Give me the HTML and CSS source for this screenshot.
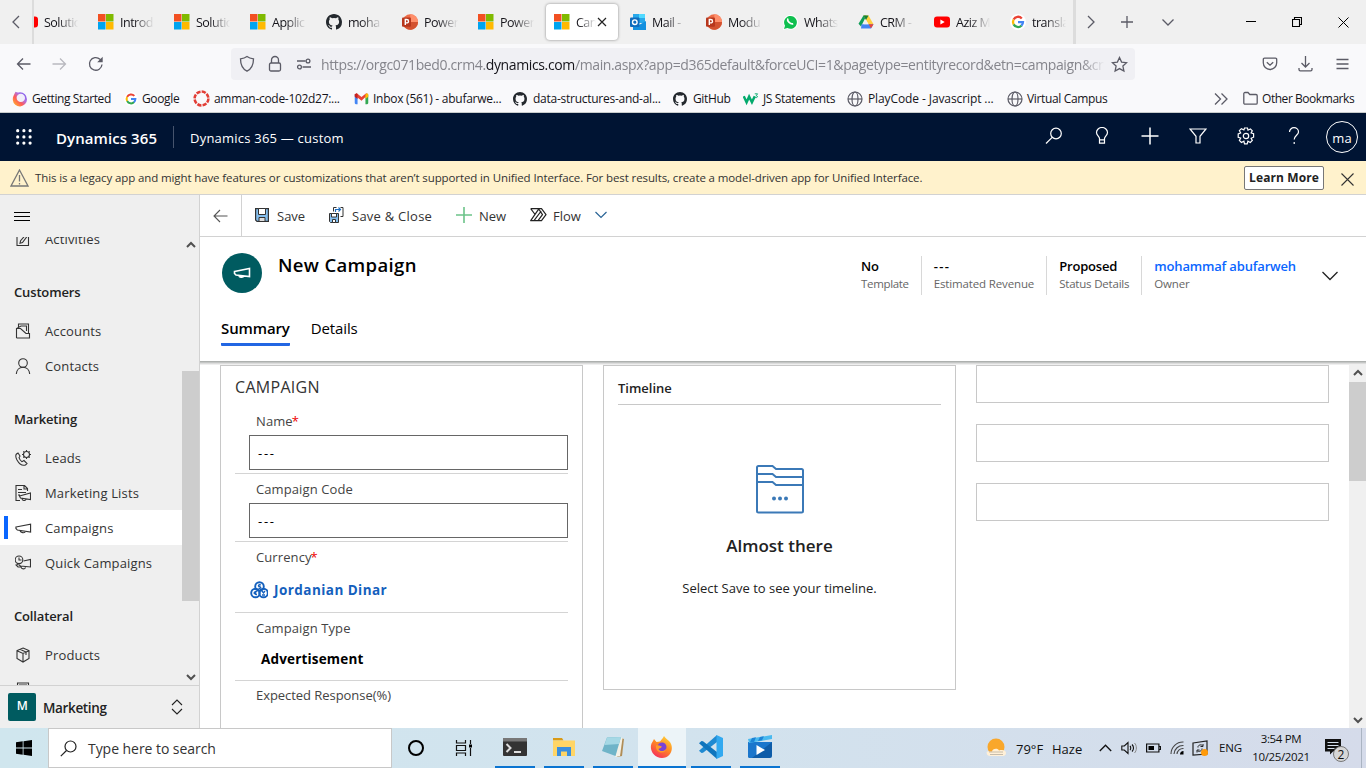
FILE: index.html
```html
<!DOCTYPE html>
<html lang="en">
<head>
<meta charset="utf-8">
<title>New Campaign - Dynamics 365</title>
<link rel="stylesheet" href="styles.css">
</head>
<body>
<svg class="defs" width="0" height="0">
  <symbol id="ms" viewBox="0 0 16 16"><path fill="#f25022" d="M0 0h7.5v7.5H0z"/><path fill="#7fba00" d="M8 0h7.5v7.5H8z"/><path fill="#00a4ef" d="M0 8h7.5v7.5H0z"/><path fill="#ffb900" d="M8 8h7.5v7.5H8z"/></symbol>
  <symbol id="gh" viewBox="0 0 16 16"><path fill="#24292e" d="M8 0C3.58 0 0 3.58 0 8c0 3.54 2.29 6.53 5.47 7.59.4.07.55-.17.55-.38v-1.49c-2.23.48-2.7-.94-2.7-.94-.36-.92-.89-1.17-.89-1.17-.73-.5.05-.49.05-.49.81.06 1.23.83 1.23.83.72 1.23 1.88.87 2.34.67.07-.52.28-.87.5-1.07-1.77-.2-3.64-.89-3.64-3.95 0-.88.31-1.59.82-2.15-.08-.2-.35-1.02.08-2.12 0 0 .67-.21 2.2.82a7.6 7.6 0 0 1 4 0c1.53-1.04 2.2-.82 2.2-.82.44 1.1.16 1.92.08 2.12.51.56.82 1.27.82 2.15 0 3.07-1.87 3.75-3.65 3.95.29.25.54.73.54 1.48v2.19c0 .21.15.46.55.38A8.01 8.01 0 0 0 16 8c0-4.42-3.58-8-8-8z"/></symbol>
  <symbol id="ppt" viewBox="0 0 16 16"><circle cx="8.3" cy="8" r="7.7" fill="#ed6c47"/><path fill="#ff8f6b" d="M8.3.3A7.7 7.7 0 0 1 16 8H8.3z"/><path fill="#d35230" d="M.9 10.2A7.7 7.7 0 0 0 16 8H8z"/><rect y="3.5" width="9" height="9.2" rx="1" fill="#b7371d"/><path fill="none" stroke="#fff" stroke-width="1.4" d="M3.3 11V5.5h1.5a1.6 1.6 0 0 1 0 3.4H3.3"/></symbol>
  <symbol id="goog" viewBox="0 0 16 16"><circle cx="8" cy="8" r="8" fill="#fff"/><g fill="none" stroke-width="2.3"><path stroke="#ea4335" d="M3.6 5.6A5 5 0 0 1 11.8 4.4"/><path stroke="#fbbc05" d="M3.6 10.4a5 5 0 0 1 0-4.8"/><path stroke="#34a853" d="M11.6 11.5a5 5 0 0 1-8-1.1"/><path stroke="#4285f4" d="M8 8.1h5a5 5 0 0 1-1.6 3.6"/></g></symbol>
  <symbol id="globe" viewBox="0 0 16 16"><g fill="none" stroke="#5b5b66" stroke-width="1.2"><circle cx="8" cy="8" r="7"/><ellipse cx="8" cy="8" rx="3" ry="7"/><path d="M1 8h14"/></g></symbol>
  <symbol id="horn" viewBox="0 0 18 14"><path fill="none" stroke="currentColor" stroke-width="1.2" d="M1 6 16.500 3v8.300L2.5 9.200 1 7.500zM5.500 9.500c0 3 5 3.200 5.600 1"/></symbol>
  <symbol id="yt" viewBox="0 0 16 16"><rect y="2.4" width="16" height="11.2" rx="3" fill="#f00"/><path fill="#fff" d="m6.4 5.5 4.3 2.5-4.3 2.5z"/></symbol>
</svg>

<div class="tabstrip">
  <div class="scroll-left"><svg width="12" height="16" viewBox="0 0 12 16"><path class="ln" d="M9 2 3 8l6 6"/></svg></div>
  <div class="tabs">
    <div class="tab first"><svg class="fav"><use href="#yt"/></svg><span>Solutio</span></div>
    <div class="tab"><svg class="fav"><use href="#ms"/></svg><span>Introd</span></div>
    <div class="tab"><svg class="fav"><use href="#ms"/></svg><span>Solutio</span></div>
    <div class="tab"><svg class="fav"><use href="#ms"/></svg><span>Applic</span></div>
    <div class="tab"><svg class="fav"><use href="#gh"/></svg><span>moha</span></div>
    <div class="tab"><svg class="fav"><use href="#ppt"/></svg><span>Power</span></div>
    <div class="tab"><svg class="fav"><use href="#ms"/></svg><span>Power</span></div>
    <div class="tab active"><svg class="fav"><use href="#ms"/></svg><span>Can</span><svg class="tab-x" viewBox="0 0 10 10"><path stroke="#222" stroke-width="1.2" d="m1 1 8 8M9 1 1 9"/></svg></div>
    <div class="tab"><svg class="fav" viewBox="0 0 16 16"><path fill="#28a8ea" d="M3 0h12v9H3z"/><path fill="#50d9ff" d="M9 0h6v4H9z"/><path fill="#0364b8" d="M3 4h6v5H3z"/><path fill="#1490df" d="M3 8l6 3 7-4v9H3z"/><rect y="3.5" width="9.5" height="9.5" rx="1" fill="#0f6cbd"/><circle cx="4.8" cy="8.2" r="2.3" fill="none" stroke="#fff" stroke-width="1.4"/></svg><span>Mail -</span></div>
    <div class="tab"><svg class="fav"><use href="#ppt"/></svg><span>Modu</span></div>
    <div class="tab"><svg class="fav" viewBox="0 0 16 16"><path fill="#fff" d="M1 16 2.2 12A7.4 7.4 0 1 1 5 14.8z"/><path fill="#0fbf4f" d="m2 15 1-3.3A6.4 6.4 0 1 1 5.4 14z"/><path fill="none" stroke="#fff" stroke-width="1.7" d="M5.8 4.5c-1 2.4 2.7 6.2 5.4 5.3"/></svg><span>Whats</span></div>
    <div class="tab"><svg class="fav" viewBox="0 0 16 16"><path fill="#0f9d58" d="M5.5 1.5h3L3 12.5.5 9.8z"/><path fill="#ffcf3f" d="M5.5 1.5h5l5 8.7h-5z"/><path fill="#188038" d="M5.5 1.5h5L8 6z"/><path fill="#4285f4" d="M3.5 10.2h12L13 14.5H3z"/><path fill="#ea4335" d="m15.5 10.2-2.5 4-2.3-4z"/><path fill="#f0f0f0" d="m8 6 2.4 4.2H5.6z"/></svg><span>CRM -</span></div>
    <div class="tab"><svg class="fav"><use href="#yt"/></svg><span>Aziz M</span></div>
    <div class="tab"><svg class="fav"><use href="#goog"/></svg><span>transla</span></div>
  </div>
  <div class="tab-tools">
    <svg width="12" height="16" viewBox="0 0 12 16"><path class="ln" d="m3 2 6 6-6 6"/></svg>
    <svg width="14" height="14" viewBox="0 0 14 14"><path class="ln" d="M7 1v12M1 7h12"/></svg>
    <svg width="14" height="14" viewBox="0 0 14 14"><path class="ln" d="m1.500 4.500 5.500 5.500 5.500-5.500"/></svg>
  </div>
  <div class="win-tools">
    <svg width="10" height="10"><path stroke="#000" d="M0 4.500h10"/></svg>
    <svg width="10" height="10"><path fill="none" stroke="#000" stroke-width="1.100" d="M.5 2.500h7v7h-7zM2.500 2.500v-2h7v7h-2"/></svg>
    <svg width="11" height="11"><path stroke="#000" d="m.5.5 10 10m0-10-10 10"/></svg>
  </div>
</div>

<div class="navbar">
  <svg class="nv-back" width="15" height="14"><path class="ln" d="M14.500 7H1.500m5.500-5.500L1.500 7 7 12.500"/></svg>
  <svg class="nv-fwd" width="15" height="14"><path class="ln" d="M.5 7h13M8 1.500 13.500 7 8 12.500"/></svg>
  <svg class="nv-reload" width="16" height="16"><path class="ln" d="M14 8.500a6.300 6.300 0 1 1-2-5.200l1.500 1.500"/><path fill="#5b5b66" d="M14.700.8v5.500H9.200z"/></svg>
  <div class="urlbar">
    <svg width="16" height="18"><path class="ln" d="M8 1.500c2 1.500 4 2 6.500 2.300 0 6-1.500 10-6.500 12.400C3 13.800 1.500 9.800 1.500 3.800 4 3.500 6 3 8 1.500z"/></svg>
    <svg width="14" height="18"><rect class="ln" x="1.500" y="8" width="11" height="8" rx="1.500"/><path class="ln" d="M3.500 8V5a3.500 3.500 0 0 1 7 0v3"/></svg>
    <svg width="16" height="12"><path class="ln" d="M1 3h8.500M6.500 9H15"/><circle class="ln" cx="12" cy="3" r="1.900"/><circle class="ln" cx="3.500" cy="9" r="1.900"/></svg>
    <div class="url">https://orgc071bed0.crm4.<b>dynamics.com</b>/main.aspx?app=d365default&amp;forceUCI=1&amp;pagetype=entityrecord&amp;etn=campaign&amp;cr</div>
    <svg width="17" height="17"><path class="ln" d="m8.500 1.500 2.100 4.600 5 .6-3.700 3.400 1 5-4.400-2.500-4.400 2.500 1-5L1.400 6.700l5-.6z"/></svg>
  </div>
  <svg class="nv-pocket" width="16" height="14"><path class="ln" d="M2.500 1.200h11a1.200 1.200 0 0 1 1.200 1.200v3.400a6.700 6.700 0 0 1-13.400 0V2.400a1.200 1.200 0 0 1 1.200-1.200zM4.800 5.200 8 8.200l3.200-3"/></svg>
  <svg class="nv-dl" width="15" height="16"><path class="ln" d="M7.500 0v11M3.500 7l4 4 4-4M1 12v1.500c0 .8.500 1.300 1.300 1.300h10.400c.8 0 1.300-.5 1.300-1.300V12"/></svg>
  <svg class="nv-menu" width="13" height="12"><path class="ln" d="M.5 1.500h12M.5 6h12M.5 10.500h12"/></svg>
</div>

<div class="bookmarks">
  <div class="bm"><svg viewBox="0 0 16 16"><defs><linearGradient id="fx" x1="1" y1="0" x2="0" y2="1"><stop offset=".1" stop-color="#7a5cf0"/><stop offset=".38" stop-color="#b070e0"/><stop offset=".6" stop-color="#ff5a5a"/><stop offset=".9" stop-color="#ffab2e"/></linearGradient></defs><path fill="url(#fx)" d="M3.500.8C5 1.500 5.500 2 8 1.200A7.100 7.100 0 1 1 .8 9C.5 6 2 4 3.500.8z"/><circle cx="8.800" cy="6.900" r="4.200" fill="#f1eefa"/></svg><span class="b1">Getting Started</span></div>
  <div class="bm"><svg viewBox="0 0 16 16" class="s14"><use href="#goog"/></svg><span class="b2">Google</span></div>
  <div class="bm"><svg viewBox="0 0 16 16" class="s17"><circle cx="8" cy="8" r="6.500" fill="none" stroke="#e23e36" stroke-width="2.400" stroke-dasharray="4 1.100"/></svg><span class="b3">amman-code-102d27:...</span></div>
  <div class="bm"><svg viewBox="0 0 16 16" class="s15"><path fill="#4285f4" d="M.8 4h3v10H2a1.200 1.200 0 0 1-1.200-1.200z"/><path fill="#34a853" d="M12.200 4h3v8.800A1.200 1.200 0 0 1 14 14h-1.800z"/><path fill="#ea4335" d="M.8 3.500 3 2.500l5 4 5-4 2.200 1-7.200 7-7.200-6z"/><path fill="#c5221f" d="M.8 3.500 3 2.500l.8 1v5l-3-2.500z"/><path fill="#fbbc04" d="M12.200 3.500 14 2.500l1.200 1V6l-3 2.500z"/></svg><span class="b4">Inbox (561) - abufarwe...</span></div>
  <div class="bm"><svg class="s14"><use href="#gh"/></svg><span class="b5">data-structures-and-al...</span></div>
  <div class="bm"><svg class="s14"><use href="#gh"/></svg><span class="b6">GitHub</span></div>
  <div class="bm"><svg viewBox="0 0 17 14" class="w3"><path fill="none" stroke="#04aa6d" stroke-width="2.600" d="m.8 4 3 6.500L6.500 4.500l3 6L12.500 4"/><path fill="none" stroke="#04aa6d" d="M12.500 1.500h3l-1.500 2c2 0 2 2.500-1 2"/></svg><span class="b7">JS Statements</span></div>
  <div class="bm"><svg class="s16"><use href="#globe"/></svg><span class="b8">PlayCode - Javascript ...</span></div>
  <div class="bm"><svg class="s16"><use href="#globe"/></svg><span class="b9">Virtual Campus</span></div>
  <div class="bm"><svg class="s14" viewBox="0 0 14 14"><path class="ln" d="m1 1.500 5.500 5.500L1 12.500m6.500-11L13 7l-5.500 5.500"/></svg></div>
  <div class="bm"><svg class="s15" viewBox="0 0 15 14"><path class="ln" d="M.8 11.500V2.200c0-.7.5-1.200 1.200-1.200h3l1.800 2H13c.7 0 1.200.5 1.200 1.200v7.300c0 .7-.5 1.200-1.200 1.200H2c-.7 0-1.200-.5-1.200-1.200z"/></svg><span class="b10">Other Bookmarks</span></div>
</div>

<header class="appbar">
  <svg class="waffle" width="16" height="16"><path stroke="#fff" stroke-width="3.200" stroke-linecap="round" stroke-dasharray="0 6.200" d="M1.700 1.700h12.600M1.700 7.900h12.600M1.700 14.100h12.600"/></svg>
  <span class="brand">Dynamics 365</span>
  <span class="appname">Dynamics 365 — custom</span>
  <div class="appicons">
    <svg width="18" height="18"><circle class="wh" cx="11" cy="6.500" r="5.300"/><path class="wh" d="M7.200 10.300 1 16.500"/></svg>
    <svg width="18" height="18"><path class="wh" d="M6.500 11.500c0-2-3-3-3-6a5.500 5 0 0 1 11 0c0 3-3 4-3 6v4.700h-5zM6.500 12.800h5"/></svg>
    <svg width="18" height="18"><path stroke="#fff" stroke-width="1.500" d="M9 .5v17M.5 9h17"/></svg>
    <svg width="18" height="18"><path class="wh" d="M1 2h16l-6 7.300V16H7V9.300z"/></svg>
    <svg width="18" height="18"><circle class="wh" cx="9" cy="9" r="2.700"/><path class="wh" d="m7.500 1 3 0 .5 2.200 2.400-1.300 1.900 2L14.100 6l2.500.8v3.400l-2.500 1 1.200 2.300-2 2-2.400-1.300-.7 2.600H7.500l-.6-2.600-2.500 1.300-2-2L3.700 11l-2.500-.8V7l2.500-1-1.300-2.300 2-2L6.900 3z"/></svg>
    <svg width="18" height="18"><path class="wh" d="M4.500 5a4.500 4.300 0 0 1 9 0c0 3-4.300 3.700-4.300 7.500M9.200 15v2"/></svg>
    <div class="avatar">ma</div>
  </div>
</header>

<div class="notice">
  <svg width="19" height="18"><path fill="none" stroke="#777" stroke-width="1.300" d="M9.500 1 18 17H1zM9.500 6v6.500M9.500 14v1.500"/></svg>
  <span class="notice-text">This is a legacy app and might have features or customizations that aren’t supported in Unified Interface. For best results, create a model-driven app for Unified Interface.</span>
  <button class="learn">Learn More</button>
  <svg class="notice-x" width="13" height="13"><path stroke="#333" stroke-width="1.100" d="m.5.5 12 12m0-12-12 12"/></svg>
</div>

<div class="workspace">
  <aside class="sidebar">
    <div class="burger"><svg width="16" height="10"><path stroke="#000" stroke-width="1" d="M0 .5h16M0 4.500h16M0 8.500h16"/></svg></div>
    <div class="side-scroll">
      <nav class="side-list">
        <a class="si"><svg viewBox="0 0 16 16"><path d="M6 2H2v12.500h11.500V2M10.500 4l1.500 1.500-4.500 6-2.500.7.600-2.500z"/></svg><span>Activities</span></a>
        <h4>Customers</h4>
        <a class="si"><svg viewBox="0 0 16 16"><path d="M3.500 4V1h10v9.500M1.500 15V5.500L6 3h5.500v5M1.500 15h13v-4.500H11L5.500 5.500h-4"/></svg><span>Accounts</span></a>
        <a class="si"><svg viewBox="0 0 16 16"><circle cx="8" cy="5" r="4.300"/><path d="M1.300 16c.3-4 3-6.700 6.700-6.700s6.400 2.700 6.700 6.700"/></svg><span>Contacts</span></a>
        <h4>Marketing</h4>
        <a class="si"><svg viewBox="0 0 16 16"><circle cx="11.500" cy="4.500" r="3"/><path d="M11.500 0v1.500M11.500 7.500V9M7 4.500h1.500M14.500 4.500H16M8.300 1.300l1 1M13.700 6.700l1 1M14.700 1.300l-1 1M9.300 6.700l-1 1M1.500 4c-1 1-1 3 .5 6 2.500 4.500 5.500 6 8.500 5l1.500-1.500-3-3-2 1.200c-2-1-2.500-2.500-3-4L5 6 3 3z"/></svg><span>Leads</span></a>
        <a class="si"><svg viewBox="0 0 16 16"><path d="M5 15.500H1V.5h8.500l3 3V6M9 .5V4h3.500M3 4.500h4M3 7.500h8M3 10h2M4.500 11 15.500 8v6.500L5.500 13zM7 13.500c0 2.500 3.500 2.500 4 .7"/></svg><span>Marketing Lists</span></a>
        <a class="si on"><svg class="hn"><use href="#horn"/></svg><span>Campaigns</span></a>
        <a class="si"><svg viewBox="0 0 16 16"><circle cx="4" cy="4.800" r="3.800"/><path d="M4 2.500V5h2.500M8.500 6l7-1.500v7.500L5.500 11l-2-1.500M3 9.500 1 10l2 2h3c.5 2.500 4 2.500 4.500.3"/></svg><span>Quick Campaigns</span></a>
        <h4>Collateral</h4>
        <a class="si"><svg viewBox="0 0 16 16"><path d="m8 1 6 2.500v8L8 15l-6-3.500v-8zM2 3.700 8 6.500l6-2.800M8 6.500V15M5 2.300l6 2.800v3"/></svg><span>Products</span></a>
        <a class="si"><svg viewBox="0 0 16 16"><path d="M2.500 1h11v14h-11zM4.500 3h7v2h-7z"/></svg></a>
      </nav>
      <div class="sbar side-bar"><svg width="10" height="7"><path class="arr" d="m1 6 4-4 4 4"/></svg><i></i><svg width="10" height="7"><path class="arr" d="m1 1 4 4 4-4"/></svg></div>
    </div>
    <div class="area"><div class="area-m">M</div><span>Marketing</span><svg width="12" height="16"><path fill="none" stroke="#222" stroke-width="1.100" d="m1 6 5-5 5 5M1 10l5 5 5-5"/></svg></div>
  </aside>

  <main class="main">
    <div class="cmdbar">
      <div class="cmd-back"><svg width="15" height="14"><path fill="none" stroke="#555" stroke-width="1.100" d="M14.500 7H1m6-6L1 7l6 6"/></svg></div>
      <svg class="c-save" width="14" height="14"><path fill="#84bdec" stroke="#333" stroke-width="1.200" d="M.6.6h12.800v12.800H2L.6 12z"/><path fill="#fff" stroke="#333" d="M3.500.5h7v6h-7z"/><path fill="#ddd" stroke="#333" d="M4 9.500h6v4H4z"/></svg>
      <span class="c1">Save</span>
      <svg class="c-saveclose" width="15" height="16"><path fill="none" stroke="#333" d="M4.500 4.500v-4h3M11.500.5H14v9h-2.500"/><path fill="none" stroke="#1f6fc0" stroke-width="1.200" d="M6.500 5V2.500h5m-2-2 2 2-2 2"/><path fill="#84bdec" stroke="#333" d="M.5 6.500h9v9h-8l-1-1z"/><path fill="#fff" stroke="#333" d="M2.500 6.500h5v3.500h-5zM3.500 12.500h3v3h-3z"/></svg>
      <span class="c2">Save &amp; Close</span>
      <svg class="c-new" width="16" height="16"><path stroke="#6cc389" stroke-width="1.600" d="M8 0v16M0 8h16"/></svg>
      <span class="c3">New</span>
      <svg class="c-flow" width="17" height="14"><path fill="none" stroke="#222" stroke-width="1.200" stroke-linejoin="round" d="M.7.7h10.800L16 6.700l-4.500 6H8l4.500-6L9 1.500M.7.7l4 5.300M9 .7.7 12.700H4L11.200 3M4 12.700h4"/></svg>
      <span class="c4">Flow</span>
      <svg class="c-chev" width="12" height="8"><path fill="none" stroke="#2a6496" stroke-width="1.200" d="m.5 1 5.500 5.500L11.500 1"/></svg>
    </div>

    <section class="rec-head">
      <div class="rec-top">
        <div class="rec-icon"><svg width="18" height="14" viewBox="0 0 18 14"><path fill="none" stroke="#fff" stroke-width="1.600" d="M1.500 5.500 16.500 2.500v8L3 9 1.500 7.500zM6 9.500c0 2.200 4.200 2.400 4.800.6"/></svg></div>
        <h1>New Campaign</h1>
        <div class="facts">
          <div class="fact"><b>No</b><span class="f1">Template</span></div>
          <div class="fact"><b class="dash">---</b><span class="f2">Estimated Revenue</span></div>
          <div class="fact"><b>Proposed</b><span class="f3">Status Details</span></div>
          <div class="fact"><b class="owner">mohammaf abufarweh</b><span class="f4">Owner</span></div>
        </div>
        <svg class="head-chev" width="16" height="10"><path fill="none" stroke="#222" stroke-width="1.300" d="m.5 1 7.500 7.500L15.500 1"/></svg>
      </div>
      <div class="rec-tabs"><span class="on">Summary</span><span>Details</span></div>
    </section>

    <section class="form">
      <div class="card campaign">
        <h2>CAMPAIGN</h2>
        <div class="field"><label>Name<em>*</em></label><div class="input">---</div></div>
        <div class="field"><label>Campaign Code</label><div class="input">---</div></div>
        <div class="field lookup"><label>Currency<em>*</em></label><div class="val"><svg width="18" height="18"><g fill="none" stroke="#1460bd" stroke-width="1.900"><circle cx="9.500" cy="5.500" r="4.300"/><circle cx="5.500" cy="12" r="4.300"/><circle cx="13.500" cy="12" r="4.300"/></g><path fill="none" stroke="#1460bd" stroke-width="1.300" d="M11 4C8.500 3 7.500 5.500 9.500 5.700s1.500 2.300-1 1.500M7 10.500c-3-1-3.500 3.500 0 3M3.500 12h3M12 14h3M12 10l1.500 2L15 10"/></svg><span class="dinar">Jordanian Dinar</span></div></div>
        <div class="field option"><label>Campaign Type</label><div class="val"><span class="adv">Advertisement</span></div></div>
        <div class="field last"><label>Expected Response(%)</label></div>
      </div>
      <div class="card timeline">
        <h3>Timeline</h3>
        <div class="empty">
          <svg width="48" height="50" viewBox="1 0 48 50"><g fill="none" stroke="#3b79b7" stroke-width="2"><path d="M3.500 2h14l3.500 3h25.500c1 0 1.500.7 1.500 1.500V47c0 1-.5 1.500-1.500 1.500h-43c-1 0-1.500-.5-1.500-1.500V3.500C2 2.500 2.500 2 3.500 2zM2 10h15.500l3.500 3h27M2 18h15.500l3.500 3h27"/></g><g fill="#3b79b7"><circle cx="19" cy="34.500" r="2"/><circle cx="25" cy="34.500" r="2"/><circle cx="31" cy="34.500" r="2"/></g></svg>
          <p class="almost">Almost there</p>
          <p class="select">Select Save to see your timeline.</p>
        </div>
      </div>
      <div class="col3"><div class="card"></div><div class="card"></div><div class="card"></div></div>
      <div class="sbar form-bar"><svg width="10" height="7"><path class="arr" d="m1 6 4-4 4 4"/></svg><i></i><svg width="10" height="7"><path class="arr" d="m1 1 4 4 4-4"/></svg></div>
    </section>
  </main>
</div>

<footer class="taskbar">
  <div class="start"><svg width="16" height="16"><path d="M0 2.200 6.700 1.300v6.300H0zM7.500 1.200 16 0v7.600H7.500zM0 8.400h6.700v6.300L0 13.800zM7.500 8.400H16V16l-8.500-1.200z"/></svg></div>
  <div class="search"><svg width="17" height="17"><circle cx="10.500" cy="6.500" r="5.500" fill="none" stroke="#222" stroke-width="1.200"/><path stroke="#222" stroke-width="1.200" d="M6.500 10.500.8 16.200"/></svg><span>Type here to search</span></div>
  <div class="tb"><svg width="18" height="18"><circle cx="9" cy="9" r="7" fill="none" stroke="#000" stroke-width="2"/></svg></div>
  <div class="tb"><svg width="18" height="16"><path fill="none" stroke="#111" stroke-width="1.200" d="M1.500 0v3h9V0M1.500 5.500h9v5h-9zM1.500 16v-3h9v3M15.500 0v4M15.500 8v8"/><path d="M14 4.500h3v3h-3z"/></svg></div>
  <div class="apps">
    <div class="app"><svg width="24" height="18"><rect width="24" height="18" rx="1" fill="#333"/><path fill="#777" d="M0 0h24v3.500H0z"/><path fill="none" stroke="#ddd" stroke-width="2" d="m3.500 6 4 4-4 4M11 14h7"/></svg></div>
    <div class="app"><svg width="22" height="18"><path fill="#d99a16" d="M0 0h9l1.500 2.500H0z"/><path fill="#ffd566" d="M0 2.500h22V18H0z"/><path fill="#3a8fdf" d="M4 9h14v9h-4v-4.500H8V18H4z"/></svg></div>
    <div class="app"><svg width="24" height="22"><path fill="#b08d57" d="m20 2 3 1-2 17-5 1z"/><path fill="#f4f1e6" d="m19 1 2.500 1L19 20l-5 1z"/><path fill="#6fb4c8" d="M6 1.500 20 1l-5.500 19L1 15z"/><path fill="#a5d8e5" d="M6 1.500 20 1l-2 7L3.500 9z"/></svg></div>
    <div class="app cur"><svg width="24" height="24"><defs><linearGradient id="ff" x1=".8" y1="0" x2=".2" y2="1"><stop offset="0" stop-color="#ffd43a"/><stop offset=".45" stop-color="#ff8a24"/><stop offset="1" stop-color="#f5285f"/></linearGradient></defs><path fill="url(#ff)" d="M14 1c1 2 3 3 5 5 6 6 2 17-7 17C4 23-1 15 1.500 8.500L3 6l1-2 2.500 3L10 6.500C11 5 12.500 4 14 1z"/><circle cx="12" cy="12" r="4.500" fill="#7a43d6"/><path fill="#ff9a2a" d="M6 10.500c3-1 4 .5 6 1-1 2-2.500 1.500-3.500 2.500 1 3 6 2.500 7.500 0-1 6-11 4-10-3.500z"/></svg></div>
    <div class="app"><svg width="24" height="24"><path fill="#1f8ad2" d="M18 0v7L4 17.700 2.500 18 0 15.700z"/><path fill="#0f75bd" d="M18 24v-7L4 6.300 2.500 6 0 8.300z"/><path fill="#32a9f0" d="m17.500 0 6.500 3v18l-6.500 3z"/></svg></div>
    <div class="app"><svg width="24" height="24"><path fill="#0e5ca8" d="M0 7h24v14a2 2 0 0 1-2 2H2a2 2 0 0 1-2-2z"/><path fill="#1a76cc" d="M0 7h24L4 23H2a2 2 0 0 1-2-2z"/><path fill="#49b9ef" d="m0 4 24-4v4L1 8z"/><path fill="#1d84d6" d="m4 3 4-.7-2 5H2zM12 2l4-.7-2 4-4 .7z"/><path fill="#fff" d="m8.500 10 8.500 5-8.500 5z"/></svg></div>
  </div>
  <div class="tray">
    <svg class="t-sun" width="21" height="20"><circle cx="10" cy="9" r="8.500" fill="#f9a72b"/><path fill="#fff0d8" d="M1 13.500h5c0-3 6-4 7-1 4-1 7 0 7 2.500s-2 3-4 3H4c-3 0-4-3-3-4.500z"/><path stroke="#b9aea0" stroke-width=".8" d="M3 14h14M4 16.500h13"/></svg>
    <span class="t-temp">79°F</span><span class="t-haze">Haze</span>
    <svg class="t-up" width="13" height="8"><path fill="none" stroke="#111" stroke-width="1.300" d="M.8 7 6.500 1.200 12.200 7"/></svg>
    <svg class="t-vol" width="17" height="14"><path fill="none" stroke="#111" stroke-width="1.100" d="M.8 5h2.500L7 1.500v11L3.300 9H.8zM9 5c1 1 1 3 0 4M11 3.500c2 2 2 5 0 7"/><path fill="none" stroke="#888" d="M13.500 2c2.500 2.500 2.500 7.500 0 10"/></svg>
    <svg class="t-bat" width="15" height="10"><path fill="none" stroke="#111" stroke-width="1.200" d="M.6 1h12.300v8H.6zM13 3.500h1.500v3H13"/><path d="M2.500 3H8v4H2.500z"/></svg>
    <svg class="t-wifi" width="14" height="14"><g fill="none" stroke="#444" stroke-width="1.100"><path d="M1 13A12 12 0 0 1 13.500 1M4 13a9 9 0 0 1 9.500-8.500M7 13a6 6 0 0 1 6.500-5.500"/></g><path d="M10 13.500a3.500 3.500 0 0 1 3.500-3.500v3.500z"/></svg>
    <svg class="t-upd" width="17" height="17"><path fill="none" stroke="#222" stroke-width="1.200" d="m1 3 14-2v13L1 15z"/><path fill="none" stroke="#222" d="M10.500 5.500c-2-1.500-5 0-4.500 2M11 4v2.500H8.500M5.500 11c2 1 5-.5 4.500-2.500M5 12.500V10h2.500"/><circle cx="12.500" cy="12.500" r="3.500" fill="#ff9a0a"/></svg>
    <span class="t-eng">ENG</span>
    <div class="t-clock"><span>3:54 PM</span><span class="t-date">10/25/2021</span></div>
    <svg class="t-note" width="26" height="26"><path fill="#111" d="M1 2h16v12.500H9L6 17.500v-3H1z"/><path stroke="#d5dfec" d="M3.500 5.500h11M3.500 8.500h11M3.500 11.500h7"/><circle cx="17" cy="17" r="7.500" fill="#d6d6d6" stroke="#777"/><text x="13.600" y="21.500">2</text></svg>
    <i class="peek"></i>
  </div>
</footer>
</body>
</html>
```
FILE: styles.css
```css
* { box-sizing: border-box; }
body { margin: 0; width: 1366px; height: 768px; overflow: hidden; display: flex; flex-direction: column; font: 13px/20px "Open Sans", "Noto Sans", sans-serif; color: #222; background: #fff; }
svg { flex: none; display: block; }
span { white-space: nowrap; }
.defs { position: absolute; }
.ln { fill: none; stroke: #5b5b66; stroke-width: 1.3; }
h1, h2, h3, h4, p { margin: 0; }

/* browser tabs */
.tabstrip { height: 44px; background: #f0f0f0; display: flex; align-items: center; flex: none; }
.scroll-left { width: 32px; padding-left: 10px; }
.tabs { width: 1044px; height: 44px; overflow: hidden; display: flex; align-items: center; flex: none; border-left: 2px solid #dcdcdc; border-right: 3px solid #dcdcdc; }
.tab { width: 76px; height: 44px; flex: none; display: flex; align-items: center; padding-left: 8px; color: #15141a; font-size: 12.500px; letter-spacing: -0.5px; }
.tab.first { margin-left: -20px; }
.fav { width: 16px; height: 16px; margin-right: 6px; }
.tab span { width: 38px; padding-top: 1px; -webkit-mask-image: linear-gradient(90deg, #000 35%, transparent 90%); mask-image: linear-gradient(90deg, #000 35%, transparent 90%); }
.tab.active { width: 72px; height: 36px; margin: 0 4px 0 0; background: #fff; border-radius: 4px; box-shadow: 0 0 3px #888; }
.tab.active span { width: 20px; -webkit-mask-image: linear-gradient(90deg, #000 10%, transparent); mask-image: linear-gradient(90deg, #000 10%, transparent); }
.tab-x { width: 10px; height: 10px; margin-left: 1px; }
.tab-tools { display: flex; align-items: center; gap: 23px; padding-left: 9px; }
.tab-tools svg:nth-child(3) { margin-left: 4px; }
.win-tools { display: flex; align-items: center; gap: 36px; padding-left: 71px; }

/* toolbar */
.navbar { height: 40px; background: #f9f9fb; display: flex; align-items: center; flex: none; padding: 0 17px 0 16px; }
.nv-fwd { margin-left: 21px; opacity: .4; }
.nv-reload { margin-left: 21px; }
.urlbar { width: 904px; height: 32px; margin-left: 127px; background: #f0f0f4; border-radius: 4px; display: flex; align-items: center; padding-left: 8px; flex: none; }
.urlbar svg:nth-child(2) { margin-left: 13px; }
.urlbar svg:nth-child(3) { margin-left: 14px; }
.url { width: 784px; margin: 1px 6px 0 9px; overflow: hidden; white-space: nowrap; font-size: 14px; color: #85858c; letter-spacing: -0.37px; -webkit-mask-image: linear-gradient(90deg, #000 97%, transparent); mask-image: linear-gradient(90deg, #000 97%, transparent); }
.url b { font-weight: 400; color: #15141a; }
.nv-pocket { margin-left: 127px; }
.nv-dl { margin-left: 20px; }
.nv-menu { margin-left: 23px; }

/* bookmarks */
.bookmarks { height: 29px; background: #f9f9fb; border-bottom: 1px solid #c8cccc; flex: none; display: grid; grid-template-columns: 112px 69px 161px 159px 160px 70px 104px 160px 207px 29px 120px; padding-left: 12px; }
.bm { display: flex; align-items: center; gap: 4px; font-size: 12px; letter-spacing: -0.35px; color: #15141a; padding-top: 1px; }
.bm svg { width: 16px; height: 16px; }
.bm .s14 { width: 14px; height: 14px; }
.bm .s15 { width: 15px; height: 15px; }
.bm .s17 { width: 17px; height: 17px; }
.bm .w3 { width: 16px; height: 14px; }
.b1 { letter-spacing: -.4px; }
.b3 { letter-spacing: -.3px; }
.b4, .b5 { letter-spacing: -.26px; }
.b8 { letter-spacing: -.1px; }
.b10 { letter-spacing: -.45px; }
.b5, .b6 { margin-left: 2px; }
.b8 { margin-left: 1px; }

/* app header */
.appbar { height: 48px; background: #001433; color: #fff; display: flex; align-items: center; flex: none; padding-left: 16px; }
.waffle { margin-top: -1px; }
.brand { margin-left: 24px; font-size: 15px; font-weight: 600; width: 117px; padding-top: 2px; letter-spacing: .08px; }
.appname { border-left: 1px solid #46546d; padding: 2px 0 0 16px; font-size: 13px; letter-spacing: .22px; }
.appicons { margin-left: auto; display: flex; align-items: center; gap: 30px; padding-right: 8px; }
.appicons svg { margin: -2px -1px 0 1px; }
.appicons .avatar { margin-left: -6px; width: 32px; height: 32px; border: 1px solid #fff; border-radius: 50%; text-align: center; line-height: 32px; font-size: 13px; }
.wh { fill: none; stroke: #fff; stroke-width: 1.200; }

/* notice */
.notice { height: 34px; background: #fff2cc; border-bottom: 1px solid #d2d2d2; display: flex; align-items: center; flex: none; padding-left: 10px; }
.notice-text { margin-left: 6px; font-size: 11.500px; width: 1209px; flex: none; color: #333; letter-spacing: -0.108px; }
.learn { width: 80px; height: 24px; padding: 0; background: #fff; border: 1px solid #777; border-radius: 2px; font: 700 12px "Open Sans", sans-serif; color: #222; letter-spacing: .1px; flex: none; }
.notice-x { margin: 4px 0 0 17px; }

/* sidebar */
.workspace { display: flex; height: 533px; flex: none; }
.sidebar { width: 200px; background: #efefef; border-right: 1px solid #d2d2d2; display: flex; flex-direction: column; flex: none; }
.burger { height: 42px; padding: 17px 0 0 14px; flex: none; }
.side-scroll { height: 448px; display: flex; overflow: hidden; flex: none; }
.side-list { width: 182px; margin-top: -16px; height: 480px; flex: none; }
.si { height: 35px; display: flex; align-items: center; padding-left: 15px; color: #333; letter-spacing: .15px; }
.si svg { width: 16px; height: 16px; fill: none; stroke: #333; stroke-width: 1.100; margin-right: 14px; }
.si .hn { width: 17px; height: 14px; margin-right: 13px; }
.si.on { background: #fff; padding-left: 7px; border-left: 4px solid; border-image: linear-gradient(#fff 7px, #0a66ff 7px, #0a66ff 28px, #fff 28px) 1; border-width: 0 0 0 4px; box-shadow: -4px 0 #fff; margin-left: 4px; }
.side-list h4 { height: 57px; padding: 26px 0 0 14px; font-size: 13px; font-weight: 600; color: #222; letter-spacing: -.15px; }
.sbar { display: flex; flex-direction: column; align-items: center; width: 17px; flex: none; }
.arr { fill: none; stroke: #505050; stroke-width: 2; }
.sbar i { width: 17px; background: #cdcdcd; flex: none; }
.side-bar { padding: 4px 0 0; }
.side-bar i { height: 230px; margin: 123px 0 73px; }
.area { height: 43px; border-top: 1px solid #d2d2d2; display: flex; align-items: center; padding-left: 8px; flex: none; font-size: 13.500px; font-weight: 600; letter-spacing: -.35px; }
.area-m { width: 28px; height: 28px; border-radius: 2px; background: #005b60; color: #fff; text-align: center; font-size: 12px; line-height: 26px; }
.area span { width: 120px; margin: 2px 8px 0 7px; }

/* command bar */
.main { width: 1166px; display: flex; flex-direction: column; }
.cmdbar { height: 42px; border-bottom: 1px solid #d2d2d2; display: flex; align-items: center; flex: none; color: #333; }
.cmdbar span { padding-top: 1px; }
.cmd-back { width: 42px; height: 41px; border-right: 1px solid #d2d2d2; padding: 14px 0 0 13px; }
.cmdbar > svg { margin-top: -1px; }
.c-save { margin-left: 13px; }
.c1 { margin-left: 8px; width: 52px; }
.c2 { margin-left: 8px; width: 104px; letter-spacing: .25px; }
.c3 { margin-left: 7px; width: 51px; }
.c4 { margin-left: 6px; width: 42px; }

/* record header */
.rec-head { height: 128px; flex: none; padding: 16px 0 0 21px; background: linear-gradient(#adb0ae 0 1px, #c4c6c5 1px 2px, #dcdcdc 2px 3px, #efefef 3px) 0 100% / 100% 4px no-repeat; }
.rec-top { display: flex; height: 59px; }
.rec-icon { width: 40px; height: 40px; margin-left: 1px; border-radius: 50%; background: #005b60; padding: 13px 0 0 11px; }
.rec-top h1 { margin: -1px 0 0 16px; width: 571px; font-size: 18.500px; line-height: 26px; font-weight: 600; color: #000; letter-spacing: .35px; }
.facts { display: flex; margin-top: 3px; height: 40px; }
.fact { display: flex; flex-direction: column; padding: 0 12px; border-left: 1px solid #d8d8d8; height: 39px; }
.fact:first-child { border-left: 0; }
.fact b { font-size: 13px; line-height: 20px; font-weight: 600; color: #000; letter-spacing: -.17px; }
.fact .dash { letter-spacing: 1.400px; }
.fact span { font-size: 11.500px; line-height: 16px; color: #666; letter-spacing: -.2px; }
.fact .f1 { letter-spacing: -.33px; }
.fact .f2 { letter-spacing: -.14px; }
.fact .owner { color: #0a66ff; }
.head-chev { margin: 18px 0 0 14px; }
.rec-tabs { display: flex; gap: 21px; font-size: 15px; line-height: 33px; color: #000; letter-spacing: -.12px; }
.rec-tabs .on { font-weight: 600; border-bottom: 3px solid #2266e3; border-radius: 1px; }
.rec-tabs span { height: 34px; }

/* form */
.form { height: 363px; display: flex; align-items: flex-start; padding-left: 20px; overflow: hidden; }
.card { border: 1px solid #c8c8c8; background: #fff; flex: none; }
.campaign { width: 363px; height: 380px; padding: 11px 14px; color: #444; }
.campaign h2 { font-size: 16px; line-height: 20px; font-weight: 400; color: #333; letter-spacing: .3px; height: 29px; }
.field { height: 68px; border-bottom: 1px solid #d4d4d4; padding: 5px 0 0 14px; }
.field label { display: block; height: 24px; line-height: 20px; padding-left: 7px; letter-spacing: .1px; }
.field em { font-style: normal; color: #e00; margin-left: -1px; }
.input { height: 35px; border: 1px solid #666; padding-left: 8px; line-height: 35px; color: #000; letter-spacing: 1.700px; }
.lookup { height: 71px; }
.val { display: flex; align-items: center; height: 38px; gap: 7px; font-weight: 700; font-size: 13.500px; }
.dinar { color: #1460bd; letter-spacing: .45px; }
.adv { color: #000; padding-left: 12px; letter-spacing: .17px; }
.lookup .val svg { margin-right: -1px; margin-left: 1px; }
.option .val { height: 34px; }
.last { border: 0; padding-top: 4px; }
.last label { letter-spacing: -.05px; }
.timeline { width: 353px; height: 325px; margin-left: 20px; padding: 9px 14px; color: #222; }
.timeline h3 { font-size: 13px; line-height: 26px; font-weight: 600; height: 30px; border-bottom: 1px solid #c8c8c8; }
.empty { display: flex; flex-direction: column; align-items: center; padding-top: 59px; }
.almost { font-size: 17px; font-weight: 600; line-height: 24px; margin-top: 20px; }
.select { margin-top: 20px; line-height: 20px; white-space: nowrap; }
.col3 { width: 353px; margin-left: 20px; display: flex; flex-direction: column; gap: 21px; }
.col3 .card { height: 38px; }
.form-bar { height: 363px; background: #f0f0f0; margin-left: 20px; padding-top: 4px; }
.form-bar i { height: 99px; margin: 6px 0 236px; }

/* taskbar */
.taskbar { height: 40px; flex: none; display: flex; background: linear-gradient(90deg, #d0e6ee, #d2e3ee 50%, #d5dbea); color: #111; }
.start { width: 48px; padding: 12px 0 0 16px; }
.search { width: 344px; height: 40px; background: #fff; border: 1px solid #c8c8c8; display: flex; align-items: center; padding-left: 11px; gap: 11px; font-size: 14px; color: #333; }
.search span { padding-top: 1px; letter-spacing: -.05px; }
.tb { width: 48px; display: flex; align-items: center; justify-content: center; }
.apps { display: flex; margin-left: 7px; gap: 9px; }
.app { width: 40px; border-bottom: 2px solid #0a74d1; display: flex; align-items: center; justify-content: center; }
.app.cur { width: 48px; margin: 0 -4px; background: #ecf4f8; }
.tray { margin-left: auto; display: flex; align-items: center; font-size: 13px; }
.t-temp { margin-left: 9px; width: 36px; padding-top: 1px; }
.t-haze { width: 47px; padding-top: 1px; }
.t-vol { margin-left: 9px; }
.t-bat { margin-left: 8px; }
.t-wifi { margin-left: 9px; }
.t-upd { margin-left: 8px; }
.t-eng { font-size: 11.500px; letter-spacing: -.2px; margin-left: 10px; width: 33px; }
.t-clock { width: 58px; display: flex; flex-direction: column; align-items: center; font-size: 11.500px; line-height: 18px; letter-spacing: -.35px; }
.t-note { margin: 4px 0 0 14px; }
.t-note text { font-size: 12px; fill: #111; }
.peek { width: 5px; height: 40px; margin-left: 11px; border-left: 1px solid #aab4c2; }
```
